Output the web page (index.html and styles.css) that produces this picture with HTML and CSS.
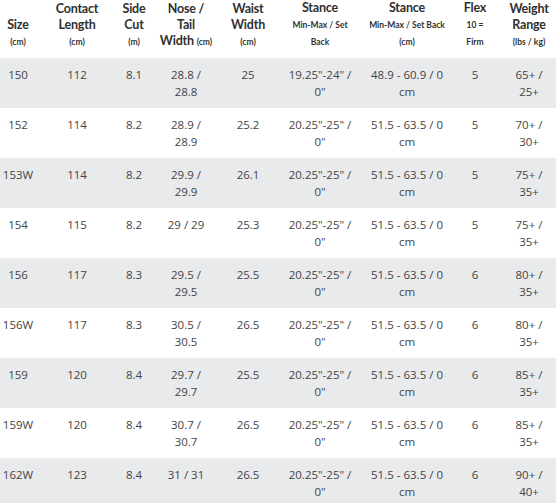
FILE: index.html
```html
<!DOCTYPE html>
<html>
<head>
<meta charset="utf-8">
<link rel="stylesheet" href="styles.css">
</head>
<body>
<table class="specs">
  <colgroup>
    <col class="c-size"><col class="c-contact"><col class="c-side"><col class="c-nose"><col class="c-waist"><col class="c-st1"><col class="c-st2"><col class="c-flex"><col class="c-weight">
  </colgroup>
  <thead>
    <tr>
      <th>Size<br><small>(cm)</small></th>
      <th>Contact<br>Length<br><small>(cm)</small></th>
      <th>Side<br>Cut<br><small>(m)</small></th>
      <th>Nose /<br>Tail<br>Width <small>(cm)</small></th>
      <th>Waist<br>Width<br><small>(cm)</small></th>
      <th>Stance<br><small>Min-Max / Set</small><br><small>Back</small></th>
      <th>Stance<br><small>Min-Max / Set Back</small><br><small>(cm)</small></th>
      <th>Flex<br><small>10 =</small><br><small>Firm</small></th>
      <th>Weight<br>Range<br><small>(lbs / kg)</small></th>
    </tr>
  </thead>
  <tbody>
    <tr class="alt"><td>150</td><td>112</td><td>8.1</td><td>28.8 /<br>28.8</td><td>25</td><td>19.25"-24" /<br>0"</td><td>48.9 - 60.9 / 0<br>cm</td><td>5</td><td>65+ /<br>25+</td></tr>
    <tr><td>152</td><td>114</td><td>8.2</td><td>28.9 /<br>28.9</td><td>25.2</td><td>20.25"-25" /<br>0"</td><td>51.5 - 63.5 / 0<br>cm</td><td>5</td><td>70+ /<br>30+</td></tr>
    <tr class="alt"><td>153W</td><td>114</td><td>8.2</td><td>29.9 /<br>29.9</td><td>26.1</td><td>20.25"-25" /<br>0"</td><td>51.5 - 63.5 / 0<br>cm</td><td>5</td><td>75+ /<br>35+</td></tr>
    <tr><td>154</td><td>115</td><td>8.2</td><td>29 / 29</td><td>25.3</td><td>20.25"-25" /<br>0"</td><td>51.5 - 63.5 / 0<br>cm</td><td>5</td><td>75+ /<br>35+</td></tr>
    <tr class="alt"><td>156</td><td>117</td><td>8.3</td><td>29.5 /<br>29.5</td><td>25.5</td><td>20.25"-25" /<br>0"</td><td>51.5 - 63.5 / 0<br>cm</td><td>6</td><td>80+ /<br>35+</td></tr>
    <tr><td>156W</td><td>117</td><td>8.3</td><td>30.5 /<br>30.5</td><td>26.5</td><td>20.25"-25" /<br>0"</td><td>51.5 - 63.5 / 0<br>cm</td><td>6</td><td>80+ /<br>35+</td></tr>
    <tr class="alt"><td>159</td><td>120</td><td>8.4</td><td>29.7 /<br>29.7</td><td>25.5</td><td>20.25"-25" /<br>0"</td><td>51.5 - 63.5 / 0<br>cm</td><td>6</td><td>85+ /<br>35+</td></tr>
    <tr><td>159W</td><td>120</td><td>8.4</td><td>30.7 /<br>30.7</td><td>26.5</td><td>20.25"-25" /<br>0"</td><td>51.5 - 63.5 / 0<br>cm</td><td>6</td><td>85+ /<br>35+</td></tr>
    <tr class="alt"><td>162W</td><td>123</td><td>8.4</td><td>31 / 31</td><td>26.5</td><td>20.25"-25" /<br>0"</td><td>51.5 - 63.5 / 0<br>cm</td><td>6</td><td>90+ /<br>40+</td></tr>
  </tbody>
</table>
</body>
</html>
```

FILE: styles.css
```css
html, body {
  margin: 0;
  padding: 0;
  background: #ffffff;
}

.specs {
  width: 556px;
  table-layout: fixed;
  border-collapse: collapse;
  border-spacing: 0;
  font-family: "Open Sans", "Noto Sans", sans-serif;
  color: #444444;
}

.c-size { width: 36px; }
.c-contact { width: 82px; }
.c-side { width: 32px; }
.c-nose { width: 72px; }
.c-waist { width: 52px; }
.c-st1 { width: 92px; }
.c-st2 { width: 82px; }
.c-flex { width: 54px; }
.c-weight { width: 54px; }

.specs th {
  font-family: "Lato", "Open Sans", sans-serif;
  font-weight: 700;
  font-size: 12.5px;
  letter-spacing: -0.2px;
  line-height: 16px;
  color: #2f2f2f;
  text-align: center;
  vertical-align: bottom;
  padding: 0 0 8px 0;
  height: 48px;
  white-space: nowrap;
}

.specs th small {
  font-size: 8.5px;
  font-weight: 700;
  letter-spacing: 0;
  color: #333333;
}

.specs td {
  font-size: 11.5px;
  line-height: 17px;
  text-align: center;
  vertical-align: top;
  padding: 8px 0;
  height: 34px;
  white-space: nowrap;
}

.specs tr.alt td {
  background: #e9eaec;
}
```
